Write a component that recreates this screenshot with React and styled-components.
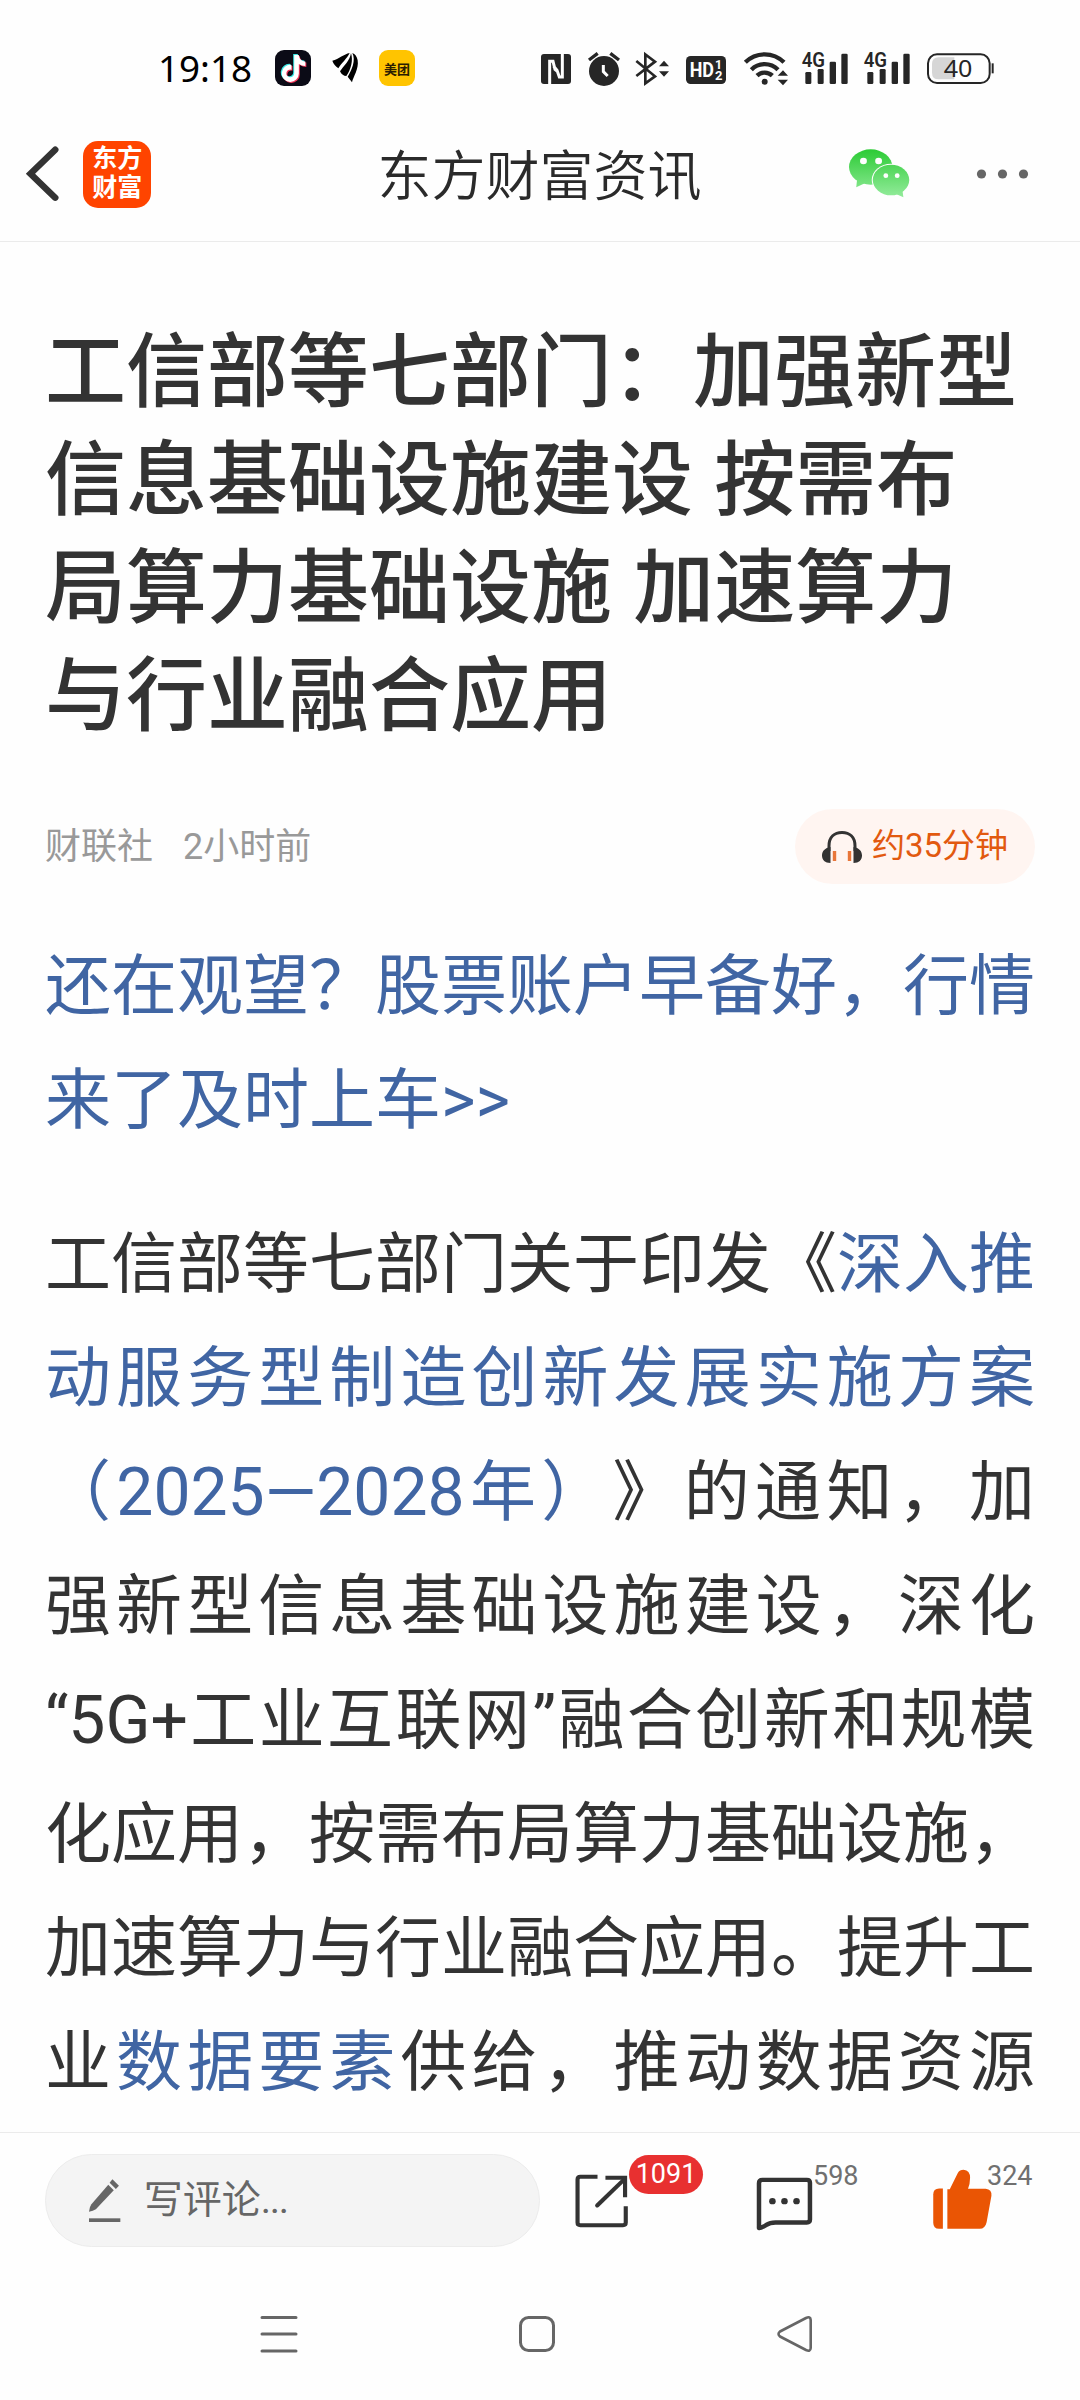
import styled, { createGlobalStyle } from "styled-components";
import { FaTiktok } from "react-icons/fa";

const GlobalStyle = createGlobalStyle`
  * {
    box-sizing: border-box;
  }

  body {
    margin: 0;
    background: #fefefe;
    font-family: Roboto, "Noto Sans CJK SC", sans-serif;
    text-spacing-trim: space-all;
  }

  h1, p {
    margin: 0;
  }

  svg {
    display: block;
    flex-shrink: 0;
    overflow: visible;
  }
`;

const Screen = styled.div`
  display: flex;
  flex-direction: column;
  width: 1080px;
  height: 2400px;
  overflow: hidden;
  color: #333;
`;

/* status bar */

const StatusBar = styled.div`
  display: flex;
  align-items: center;
  justify-content: space-between;
  height: 106px;
  padding: 50px 86px 20px 158px;
`;

const StatusGroup = styled.div`
  display: flex;
  align-items: center;
  gap: ${(props) => props.$gap}px;
`;

const Clock = styled.span`
  width: 96px;
  color: #000;
  font-family: "Noto Sans", sans-serif;
  font-size: 36.8px;
  line-height: 36px;
  white-space: nowrap;
`;

const AppBadge = styled.span`
  position: relative;
  display: flex;
  align-items: center;
  justify-content: center;
  width: 36px;
  height: 36px;
  border-radius: 9px;
  background: ${(props) => props.$bg};
  color: #2b1d00;
  font-size: 13px;
  font-weight: 700;
`;

const Note = styled(FaTiktok)`
  position: absolute;
  top: ${(props) => props.$y}px;
  left: ${(props) => props.$x}px;
  color: ${(props) => props.$tone};
`;

/* header */

const Header = styled.header`
  display: grid;
  grid-template-columns: 1fr auto 1fr;
  align-items: center;
  height: 136px;
  padding: 1px 52px 0 27px;
  border-bottom: 1px solid #ebebeb;
`;

const HeaderSide = styled.div`
  display: flex;
  align-items: center;
  justify-content: ${(props) => (props.$end ? "flex-end" : "flex-start")};
  gap: ${(props) => (props.$end ? 68 : 25)}px;
`;

const HeaderTitle = styled.div`
  padding: 8px 0 0 24px;
  color: #2a2a2a;
  font-size: 54px;
  font-weight: 350;
  line-height: 60px;
`;

const BrandLogo = styled.div`
  width: 68px;
  height: 67px;
  padding: 3px 0 0 9px;
  border-radius: 15px;
  background: #ff4400;
  color: #fff;
  font-size: 25px;
  font-weight: 700;
  line-height: 29.5px;
`;

/* article */

const Article = styled.article`
  flex: 1;
  padding: 77px 45px 0;
`;

const Title = styled.h1`
  color: #333;
  font-size: 81px;
  font-weight: 500;
  line-height: 108px;
  word-spacing: 1px;
`;

const Meta = styled.div`
  display: flex;
  align-items: center;
  justify-content: space-between;
  height: 75px;
  margin-top: 58px;
`;

const Source = styled.div`
  display: flex;
  gap: 30px;
  color: #999;
  font-size: 36px;
  line-height: 44px;
`;

const ListenButton = styled.button`
  display: flex;
  align-items: center;
  gap: 10px;
  width: 240px;
  height: 75px;
  padding: 0 0 0 27px;
  border: none;
  border-radius: 38px;
  background: #fff5f1;
  color: #e2590f;
  font-family: inherit;
  font-size: 33px;
  line-height: 40px;
  white-space: nowrap;

  & span {
    padding-bottom: 2px;
  }
`;

const Paragraph = styled.p`
  margin-top: ${(props) => props.$top}px;
  color: #333;
  font-size: 66px;
  font-weight: 400;
  line-height: 114px;
`;

const Line = styled.span`
  display: block;
  height: 114px;
  text-align: justify;
  text-align-last: ${(props) => (props.$last ? "left" : "justify")};
  white-space: nowrap;
`;

const Link = styled.span`
  color: #4065a3;
`;

/* bottom bar */

const CommentBar = styled.footer`
  display: flex;
  height: 136px;
  padding: 21px 89px 21px 45px;
  border-top: 1px solid #ebebeb;
`;

const CommentInput = styled.div`
  display: flex;
  align-items: center;
  gap: 23px;
  width: 495px;
  height: 93px;
  padding-left: 43px;
  border: 1px solid #ececec;
  border-radius: 47px;
  background: #f4f4f4;
  color: #666;
  font-size: 39px;
  line-height: 46px;

  & span {
    padding-bottom: 2px;
  }

  & i {
    font-style: normal;
    letter-spacing: -1.2px;
  }
`;

const Actions = styled.div`
  display: flex;
  flex: 1;
  align-items: center;
  justify-content: space-between;
  padding-left: 35px;
`;

const Action = styled.div`
  position: relative;
  width: 58px;
  height: 66px;
`;

const Count = styled.span`
  position: absolute;
  top: -8px;
  left: ${(props) => props.$left}px;
  color: #707070;
  font-size: 27px;
  line-height: 32px;
`;

const Badge = styled(Count)`
  top: -13px;
  width: 74px;
  height: 39px;
  border-radius: 20px;
  background: #e83030;
  color: #fff;
  line-height: 38px;
  text-align: center;
`;

const NavBar = styled.nav`
  display: flex;
  align-items: center;
  gap: 222px;
  height: 132px;
  padding-left: 261px;
`;

/* Paths are drawn on a fine grid: sx by 3 units to a pixel */
function Glyph({ box, sx = 2.904, children }) {
  const [, , w, h] = box;
  return (
    <svg
      width={w / sx}
      height={h / 3}
      viewBox={box.join(" ")}
      preserveAspectRatio="none"
    >
      {children}
    </svg>
  );
}

function Leaf() {
  return (
    <Glyph box={[576, 63, 78, 108]} sx={3}>
      <path d="M577 95C597 90 612 75 629 72C621 89 605 101 595 118C587 112 580 105 577 95Z" />
      <path d="M633 73C629 96 612 110 600 127C605 137 611 141 619 141C633 122 640 94 633 73Z" />
      <path d="M637 72C648 94 636 122 623 143L636 160C640 143 657 120 653 94C651 82 645 75 637 72Z" />
    </Glyph>
  );
}

function Signal() {
  return (
    <Glyph box={[846, 60, 138, 108]} sx={3}>
      <g fill="#262626">
        <rect x="856" y="126" width="18" height="36" rx="4" />
        <rect x="893" y="117" width="18" height="45" rx="4" />
        <rect x="929" y="95" width="19" height="67" rx="4" />
        <rect x="964" y="71" width="19" height="91" rx="4" />
        <text
          x="845"
          y="111"
          fontSize="61"
          fontWeight="600"
          textLength="70"
          lengthAdjust="spacingAndGlyphs"
        >
          4G
        </text>
      </g>
    </Glyph>
  );
}

function StatusIcons() {
  return (
    <StatusGroup $gap={16}>
      <Glyph box={[63, 60, 90, 108]} sx={3}>
        <rect x="63" y="72" width="90" height="90" rx="9" fill="#262626" />
        <path
          d="M89 163V94L99 94L105 118L114 126M127 71V141L118 141L111 121L101 109"
          fill="none"
          stroke="#fefefe"
          strokeWidth="9"
        />
      </Glyph>
      <Glyph box={[201, 60, 99, 108]} sx={3}>
        <circle cx="252" cy="123" r="45" fill="#262626" />
        <path
          d="M207 90L233 70M271 70L297 90"
          stroke="#262626"
          strokeWidth="10"
        />
        <path
          d="M250 105V125L263 138"
          fill="none"
          stroke="#fefefe"
          strokeWidth="9"
        />
      </Glyph>
      <Glyph box={[348, 60, 102, 108]} sx={3}>
        <path
          d="M349 93L405 139L376 160V73L405 95L349 138"
          fill="none"
          stroke="#262626"
          strokeWidth="8"
        />
        <path d="M417 109H447L432 92ZM417 124H447L432 140Z" fill="#262626" />
      </Glyph>
      <Glyph box={[498, 60, 120, 108]} sx={3}>
        <rect x="498" y="78" width="120" height="84" rx="14" fill="#262626" />
        <g fill="#fefefe" fontWeight="700">
          <text
            x="509"
            y="142"
            fontSize="62"
            textLength="73"
            lengthAdjust="spacingAndGlyphs"
          >
            HD
          </text>
          <text x="585" y="117" fontSize="37">
            1
          </text>
          <text x="585" y="151" fontSize="39">
            2
          </text>
        </g>
      </Glyph>
      <Glyph box={[666, 60, 132, 108]} sx={3}>
        <g fill="none" stroke="#262626" strokeWidth="13">
          <path d="M676 97A82 82 0 0 1 792 97" />
          <path d="M694 119A56 56 0 0 1 774 119" />
          <path d="M711 137A33 33 0 0 1 757 137" />
        </g>
        <circle cx="734" cy="155" r="9" fill="#262626" />
        <path d="M773 137H804L789 121ZM773 149H804L789 166Z" fill="#262626" />
      </Glyph>
      <Signal />
      <Signal />
      <Glyph box={[1218, 60, 204, 108]} sx={3}>
        <path
          d="M1256 82H1303V148H1256Q1236 148 1236 128V102Q1236 82 1256 82Z"
          fill="#d6d6d6"
        />
        <rect
          x="1224"
          y="73"
          width="185"
          height="86"
          rx="27"
          fill="none"
          stroke="#262626"
          strokeWidth="6"
        />
        <path d="M1418 100V130" stroke="#262626" strokeWidth="6" />
        <text
          x="1271"
          y="140"
          fontSize="70"
          fontFamily="Noto Sans"
          fill="#262626"
          textLength="86"
          lengthAdjust="spacingAndGlyphs"
        >
          40
        </text>
      </Glyph>
    </StatusGroup>
  );
}

function BackIcon() {
  return (
    <Glyph box={[78, 80, 91, 166]}>
      <path
        d="M160 91L88 163L160 235"
        fill="none"
        stroke="#333"
        strokeWidth="19"
        strokeLinecap="round"
      />
    </Glyph>
  );
}

function WechatIcon() {
  return (
    <Glyph box={[896, 80, 175, 166]}>
      <defs>
        <linearGradient
          id="chat"
          gradientUnits="userSpaceOnUse"
          x1="0"
          y1="90"
          x2="0"
          y2="232"
        >
          <stop offset="0" stopColor="#2ccb35" />
          <stop offset="1" stopColor="#92eb9a" />
        </linearGradient>
      </defs>
      <g fill="url(#chat)">
        <ellipse cx="959" cy="143" rx="63" ry="53" />
        <path d="M920 176L917 204L942 192Z" />
      </g>
      <ellipse cx="1018" cy="182" rx="56" ry="49" fill="#fefefe" />
      <g fill="url(#chat)">
        <ellipse cx="1018" cy="182" rx="53" ry="46" />
        <path d="M1034 225L1054 234L1051 212Z" />
      </g>
      <g fill="#fefefe">
        <circle cx="938" cy="125" r="10" />
        <circle cx="982" cy="125" r="10" />
        <circle cx="1003" cy="169" r="7" />
        <circle cx="1036" cy="169" r="7" />
      </g>
    </Glyph>
  );
}

function HeadphoneIcon() {
  return (
    <svg width="40" height="32" viewBox="0 0 40 32">
      <path
        d="M7 20V15C7 6 12.500 1.500 20 1.500S33 6 33 15V20"
        fill="none"
        stroke="#333"
        strokeWidth="3"
      />
      <path
        d="M8.500 16V32C3 32 0 29 0 24.500S3 17 8.500 16ZM31.500 16V32C37 32 40 29 40 24.500S37 17 31.500 16Z"
        fill="#333"
      />
      <path d="M12.500 20V30M27.500 20V30" stroke="#e8763a" strokeWidth="3.400" />
    </svg>
  );
}

function PencilIcon() {
  return (
    <Glyph box={[257, 173, 92, 130]}>
      <g fill="#666">
        <path d="M325 174L344 193L335 203L317 184Z" />
        <path d="M313 190L329 207L277 264Q269 270 257 271Q258 257 264 249Z" />
        <rect x="257" y="291" width="91" height="11" />
      </g>
    </Glyph>
  );
}

function ShareIcon() {
  return (
    <Glyph box={[101.6, 142.5, 168.4, 198]}>
      <g fill="none" stroke="#333" strokeWidth="12">
        <path d="M167 169H117Q109 169 109 177V306Q109 314 117 314H241Q249 314 249 306V257" />
        <path d="M166 255L246 175" strokeLinecap="round" />
        <path d="M190 172H247V230" />
      </g>
    </Glyph>
  );
}

function CommentIcon() {
  return (
    <Glyph box={[621.5, 142.5, 168.4, 198]}>
      <path
        d="M646 178H775Q784 178 784 187V297Q784 306 775 306H684Q668 306 656 314Q646 321 636 323V188Q636 178 646 178Z"
        fill="none"
        stroke="#333"
        strokeWidth="13"
        strokeLinejoin="round"
      />
      <g fill="#333">
        <circle cx="675" cy="242" r="9.500" />
        <circle cx="710" cy="242" r="9.500" />
        <circle cx="745" cy="242" r="9.500" />
      </g>
    </Glyph>
  );
}

function ThumbIcon() {
  return (
    <Glyph box={[1141.3, 142.5, 168.4, 198]}>
      <g fill="#ea5504">
        <path d="M1170 204V325H1159Q1142 325 1142 307V222Q1142 204 1159 204Z" />
        <path d="M1183 325V206H1190L1213 158Q1219 148 1230 148Q1249 150 1249 172Q1249 190 1243 205H1294Q1313 207 1311 226L1297 305Q1293 324 1277 325Z" />
      </g>
    </Glyph>
  );
}

function App() {
  return (
    <>
      <GlobalStyle />
      <Screen>
        <StatusBar>
          <StatusGroup $gap={21}>
            <Clock>19:18</Clock>
            <AppBadge $bg="#0b0b16">
              <Note size={27} $x={4} $y={4} $tone="#3ce6e4" />
              <Note size={27} $x={6} $y={6} $tone="#f4385c" />
              <Note size={27} $x={5} $y={5} $tone="#fff" />
            </AppBadge>
            <Leaf />
            <AppBadge $bg="#ffc400">美团</AppBadge>
          </StatusGroup>
          <StatusIcons />
        </StatusBar>

        <Header>
          <HeaderSide>
            <BackIcon />
            <BrandLogo>
              东方
              <br />
              财富
            </BrandLogo>
          </HeaderSide>
          <HeaderTitle>东方财富资讯</HeaderTitle>
          <HeaderSide $end>
            <WechatIcon />
            <svg width="51" height="10" viewBox="0 0 51 10" fill="#666">
              <circle cx="4.500" cy="5" r="4.600" />
              <circle cx="25.500" cy="5" r="4.600" />
              <circle cx="46.500" cy="5" r="4.600" />
            </svg>
          </HeaderSide>
        </Header>

        <Article>
          <Title>
            工信部等七部门：加强新型
            <br />
            信息基础设施建设 按需布
            <br />
            局算力基础设施 加速算力
            <br />
            与行业融合应用
          </Title>
          <Meta>
            <Source>
              <span>财联社</span>
              <span>2小时前</span>
            </Source>
            <ListenButton>
              <HeadphoneIcon />
              <span>约35分钟</span>
            </ListenButton>
          </Meta>

          <Paragraph $top={46}>
            <Link>
              <Line>还在观望？股票账户早备好，行情</Line>
              <Line $last>来了及时上车&gt;&gt;</Line>
            </Link>
          </Paragraph>

          <Paragraph $top={50}>
            <Line>
              工信部等七部门关于印发《<Link>深入推</Link>
            </Line>
            <Line>
              <Link>动服务型制造创新发展实施方案</Link>
            </Line>
            <Line>
              <Link>（2025—2028年）</Link>》的通知，加
            </Line>
            <Line>强新型信息基础设施建设，深化</Line>
            <Line>“5G+工业互联网”融合创新和规模</Line>
            <Line>化应用，按需布局算力基础设施，</Line>
            <Line>加速算力与行业融合应用。提升工</Line>
            <Line>
              业<Link>数据要素</Link>供给，推动数据资源
            </Line>
          </Paragraph>
        </Article>

        <CommentBar>
          <CommentInput>
            <PencilIcon />
            <span>
              写评论<i>...</i>
            </span>
          </CommentInput>
          <Actions>
            <Action>
              <ShareIcon />
              <Badge $left={54}>1091</Badge>
            </Action>
            <Action>
              <CommentIcon />
              <Count $left={59}>598</Count>
            </Action>
            <Action>
              <ThumbIcon />
              <Count $left={54}>324</Count>
            </Action>
          </Actions>
        </CommentBar>

        <NavBar>
          <svg width="36" height="36" viewBox="0 0 36 36">
            <path
              d="M1 1.500H35M1 18H35M1 35H35"
              stroke="#666"
              strokeWidth="3"
              strokeLinecap="round"
            />
          </svg>
          <svg width="36" height="36" viewBox="0 0 36 36">
            <rect
              x="1.500"
              y="1.500"
              width="33"
              height="33"
              rx="8"
              fill="none"
              stroke="#666"
              strokeWidth="3"
            />
          </svg>
          <svg width="36" height="36" viewBox="0 0 36 36">
            <path
              d="M29 2Q33.500 0 33.700 4V32Q33.500 36 29 34L3 20.500Q0 18 3 15.500Z"
              fill="none"
              stroke="#666"
              strokeWidth="2.600"
              strokeLinejoin="round"
            />
          </svg>
        </NavBar>
      </Screen>
    </>
  );
}

export default App;
